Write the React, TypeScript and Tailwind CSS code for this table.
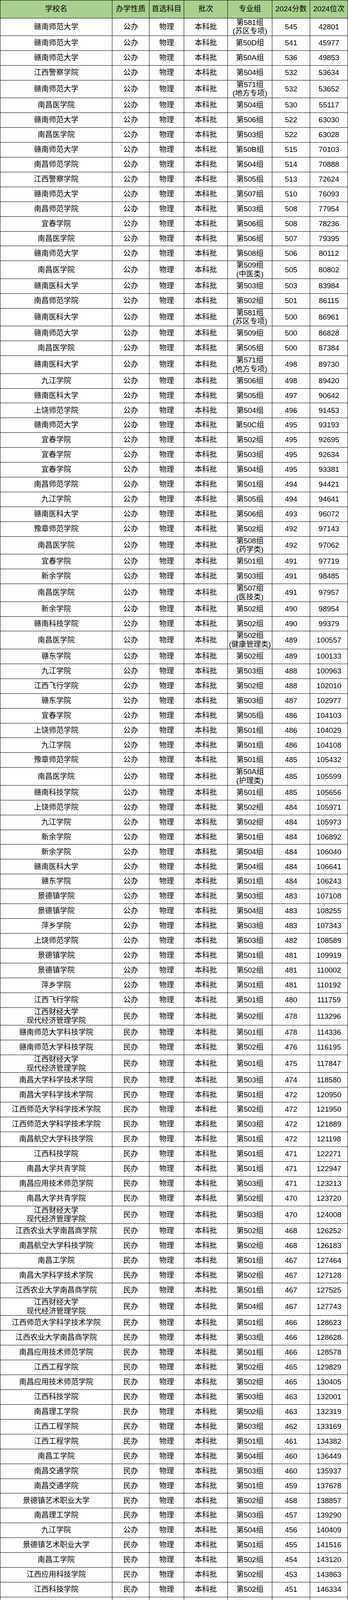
type Row = [string, string, string, number, number];

// [学校名, 办学性质, 专业组, 2024分数, 2024位次]
const rows: Row[] = [
  ['赣南师范大学', '公办', '第581组\n(苏区专项)', 545, 42801],
  ['赣南师范大学', '公办', '第50D组', 541, 45977],
  ['赣南师范大学', '公办', '第50A组', 536, 49853],
  ['江西警察学院', '公办', '第504组', 532, 53634],
  ['赣南师范大学', '公办', '第571组\n(地方专项)', 532, 53652],
  ['南昌医学院', '公办', '第504组', 530, 55117],
  ['赣南师范大学', '公办', '第506组', 522, 63030],
  ['南昌医学院', '公办', '第503组', 522, 63028],
  ['赣南师范大学', '公办', '第50B组', 515, 70103],
  ['南昌师范学院', '公办', '第504组', 514, 70888],
  ['江西警察学院', '公办', '第505组', 513, 72624],
  ['赣南师范大学', '公办', '第507组', 510, 76093],
  ['南昌师范学院', '公办', '第503组', 508, 77954],
  ['宜春学院', '公办', '第506组', 508, 78236],
  ['南昌医学院', '公办', '第506组', 507, 79395],
  ['赣南师范大学', '公办', '第508组', 506, 80112],
  ['南昌医学院', '公办', '第509组\n(中医类)', 505, 80802],
  ['赣南医科大学', '公办', '第503组', 503, 83984],
  ['南昌师范学院', '公办', '第502组', 501, 86115],
  ['赣南医科大学', '公办', '第581组\n(苏区专项)', 500, 86961],
  ['赣南师范大学', '公办', '第509组', 500, 86828],
  ['南昌医学院', '公办', '第505组', 500, 87384],
  ['赣南医科大学', '公办', '第571组\n(地方专项)', 498, 89730],
  ['九江学院', '公办', '第506组', 498, 89420],
  ['赣南医科大学', '公办', '第505组', 497, 90642],
  ['上饶师范学院', '公办', '第504组', 496, 91453],
  ['赣南师范大学', '公办', '第50C组', 495, 93193],
  ['宜春学院', '公办', '第502组', 495, 92695],
  ['宜春学院', '公办', '第503组', 495, 92634],
  ['宜春学院', '公办', '第504组', 495, 93381],
  ['南昌师范学院', '公办', '第501组', 494, 94421],
  ['九江学院', '公办', '第505组', 494, 94641],
  ['赣南医科大学', '公办', '第506组', 493, 96072],
  ['豫章师范学院', '公办', '第502组', 492, 97143],
  ['南昌医学院', '公办', '第508组\n(药学类)', 492, 97062],
  ['宜春学院', '公办', '第501组', 491, 97719],
  ['新余学院', '公办', '第503组', 491, 98485],
  ['南昌医学院', '公办', '第507组\n(医技类)', 491, 97957],
  ['新余学院', '公办', '第502组', 490, 98954],
  ['赣南科技学院', '公办', '第502组', 490, 99379],
  ['南昌医学院', '公办', '第502组\n(健康管理类)', 489, 100557],
  ['赣东学院', '公办', '第502组', 489, 100133],
  ['九江学院', '公办', '第503组', 488, 100963],
  ['江西飞行学院', '公办', '第502组', 488, 102010],
  ['赣东学院', '公办', '第503组', 487, 102977],
  ['宜春学院', '公办', '第505组', 486, 104103],
  ['上饶师范学院', '公办', '第501组', 486, 104029],
  ['九江学院', '公办', '第501组', 486, 104108],
  ['豫章师范学院', '公办', '第501组', 485, 105432],
  ['南昌医学院', '公办', '第50A组\n(护理类)', 485, 105599],
  ['赣南科技学院', '公办', '第501组', 485, 105656],
  ['上饶师范学院', '公办', '第502组', 484, 105971],
  ['九江学院', '公办', '第502组', 484, 105973],
  ['新余学院', '公办', '第501组', 484, 106892],
  ['新余学院', '公办', '第504组', 484, 106040],
  ['赣南医科大学', '公办', '第504组', 484, 106641],
  ['赣东学院', '公办', '第501组', 484, 106243],
  ['景德镇学院', '公办', '第503组', 483, 107108],
  ['景德镇学院', '公办', '第504组', 483, 108255],
  ['萍乡学院', '公办', '第503组', 483, 107343],
  ['上饶师范学院', '公办', '第503组', 482, 108589],
  ['景德镇学院', '公办', '第501组', 481, 109919],
  ['景德镇学院', '公办', '第502组', 481, 110002],
  ['萍乡学院', '公办', '第501组', 481, 110192],
  ['江西飞行学院', '公办', '第501组', 480, 111759],
  ['江西财经大学\n现代经济管理学院', '民办', '第502组', 478, 113296],
  ['赣南师范大学科技学院', '民办', '第501组', 478, 114336],
  ['赣南师范大学科技学院', '民办', '第502组', 476, 116195],
  ['江西财经大学\n现代经济管理学院', '民办', '第501组', 475, 117847],
  ['南昌大学科学技术学院', '民办', '第503组', 474, 118580],
  ['南昌大学科学技术学院', '民办', '第501组', 472, 120950],
  ['江西师范大学科学技术学院', '民办', '第502组', 472, 121950],
  ['江西师范大学科学技术学院', '民办', '第503组', 472, 121889],
  ['南昌航空大学科技学院', '民办', '第501组', 472, 121198],
  ['江西科技学院', '民办', '第501组', 471, 122271],
  ['南昌大学共青学院', '民办', '第501组', 471, 122947],
  ['南昌应用技术师范学院', '民办', '第503组', 471, 123213],
  ['南昌大学共青学院', '民办', '第502组', 470, 123720],
  ['江西财经大学\n现代经济管理学院', '民办', '第503组', 470, 124008],
  ['江西农业大学南昌商学院', '民办', '第502组', 468, 126252],
  ['南昌航空大学科技学院', '民办', '第502组', 468, 126183],
  ['南昌工学院', '民办', '第501组', 467, 127464],
  ['南昌大学科学技术学院', '民办', '第502组', 467, 127128],
  ['江西农业大学南昌商学院', '民办', '第501组', 467, 127525],
  ['江西财经大学\n现代经济管理学院', '民办', '第504组', 467, 127743],
  ['江西师范大学科学技术学院', '民办', '第501组', 466, 128623],
  ['江西农业大学南昌商学院', '民办', '第503组', 466, 128628],
  ['南昌应用技术师范学院', '民办', '第501组', 466, 128578],
  ['江西工程学院', '民办', '第502组', 465, 129829],
  ['南昌应用技术师范学院', '民办', '第502组', 465, 130405],
  ['江西科技学院', '民办', '第503组', 463, 132001],
  ['南昌理工学院', '民办', '第502组', 463, 132319],
  ['江西工程学院', '民办', '第503组', 462, 133169],
  ['江西工程学院', '民办', '第501组', 461, 134382],
  ['南昌工学院', '民办', '第504组', 460, 136449],
  ['南昌交通学院', '民办', '第503组', 460, 135937],
  ['南昌交通学院', '民办', '第501组', 459, 137678],
  ['景德镇艺术职业大学', '民办', '第502组', 458, 138857],
  ['南昌理工学院', '民办', '第503组', 457, 139290],
  ['九江学院', '公办', '第504组', 456, 140409],
  ['景德镇艺术职业大学', '民办', '第501组', 455, 141516],
  ['南昌工学院', '民办', '第502组', 454, 143120],
  ['江西应用科技学院', '民办', '第502组', 453, 143863],
  ['江西科技学院', '民办', '第502组', 451, 146334],
];

const headers = ['学校名', '办学性质', '首选科目', '批次', '专业组', '2024分数', '2024位次'];

// the browser window is 4096 tall, so the rows are kept a little shorter
// than the 40/48px of the picture to fit the whole sheet in it
const grid = 'grid grid-cols-[287px_95px_89px_112px_114px_97px_1fr]';
const cell =
  'flex items-center justify-center text-center border-r border-black whitespace-pre-line leading-[22.7px]';

function Cell({ children }: { children?: React.ReactNode }) {
  return <div className={cell}>{children}</div>;
}

export default function App() {
  return (
    <div
      className="w-[892px] bg-white text-black text-[19px] border-l border-t border-black"
      style={{ fontFamily: '"Liberation Sans", "Noto Sans CJK SC", sans-serif' }}
    >
      {/* Header */}
      <div className={`${grid} h-[45.5px] bg-[#a9d08e] border-b border-black`}>
        {headers.map((h) => (
          <Cell key={h}>{h}</Cell>
        ))}
      </div>

      {rows.map(([name, kind, group, score, rank], i) => {
        const tall = name.includes('\n') || group.includes('\n');
        return (
          <div key={i} className={`${grid} ${tall ? 'h-[45.5px]' : 'h-[37.93px]'} border-b border-black`}>
            <Cell>{name}</Cell>
            <Cell>{kind}</Cell>
            <Cell>物理</Cell>
            <Cell>本科批</Cell>
            <Cell>{group}</Cell>
            <Cell>{score}</Cell>
            <Cell>{rank}</Cell>
          </div>
        );
      })}

      {/* next row, cut off by the bottom edge */}
      <div className={`${grid} h-[37.93px] border-b border-black`}>
        {headers.map((h) => (
          <Cell key={h} />
        ))}
      </div>
    </div>
  );
}
